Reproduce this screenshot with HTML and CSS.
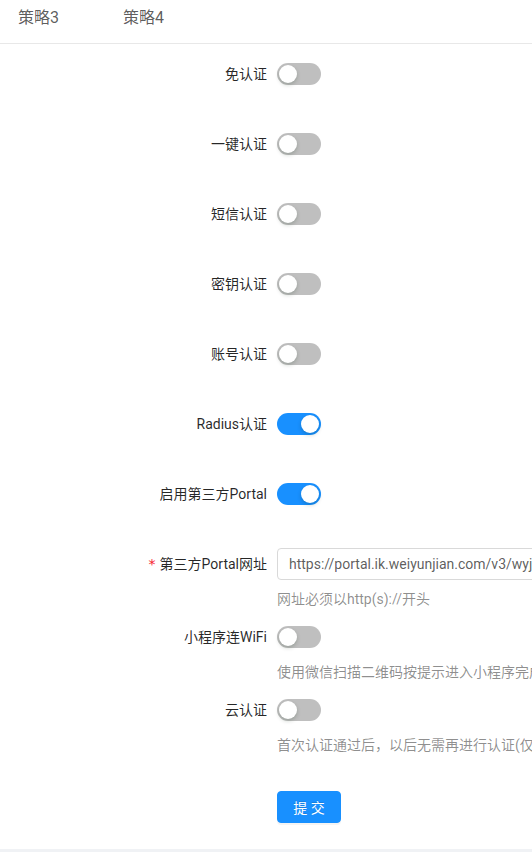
FILE: index.html
```html
<!DOCTYPE html>
<html lang="zh-CN">
<head>
<meta charset="utf-8">
<title>认证策略</title>
<link rel="stylesheet" href="styles.css">
</head>
<body>
<div class="page">
  <div class="tabs">
    <div class="tab">策略3</div>
    <div class="tab">策略4</div>
  </div>
  <form class="form">
    <div class="item">
      <label class="label">免认证</label>
      <div class="control"><span class="switch"></span></div>
    </div>
    <div class="item">
      <label class="label">一键认证</label>
      <div class="control"><span class="switch"></span></div>
    </div>
    <div class="item">
      <label class="label">短信认证</label>
      <div class="control"><span class="switch"></span></div>
    </div>
    <div class="item">
      <label class="label">密钥认证</label>
      <div class="control"><span class="switch"></span></div>
    </div>
    <div class="item">
      <label class="label">账号认证</label>
      <div class="control"><span class="switch"></span></div>
    </div>
    <div class="item">
      <label class="label">Radius认证</label>
      <div class="control"><span class="switch on"></span></div>
    </div>
    <div class="item">
      <label class="label">启用第三方Portal</label>
      <div class="control"><span class="switch on"></span></div>
    </div>
    <div class="item with-help">
      <label class="label"><span class="req">*</span>第三方Portal网址</label>
      <div class="control"><input class="input" type="text" value="https://portal.ik.weiyunjian.com/v3/wyj/portal/index.html"></div>
      <div class="help">网址必须以http(s)://开头</div>
    </div>
    <div class="item with-help">
      <label class="label">小程序连WiFi</label>
      <div class="control"><span class="switch"></span></div>
      <div class="help">使用微信扫描二维码按提示进入小程序完成连网认证</div>
    </div>
    <div class="item with-help last">
      <label class="label">云认证</label>
      <div class="control"><span class="switch"></span></div>
      <div class="help">首次认证通过后，以后无需再进行认证(仅限同一设备)</div>
    </div>
    <div class="item">
      <div></div>
      <div class="control"><button type="button" class="btn">提 交</button></div>
    </div>
  </form>
</div>
</body>
</html>
```

FILE: styles.css
```css
html, body {
  margin: 0;
  padding: 0;
}
body {
  background: #f0f2f5;
  font-family: Roboto, "Noto Sans CJK SC", sans-serif;
  font-size: 14px;
  color: rgba(0, 0, 0, 0.85);
  overflow: hidden;
}
.page {
  background: #fff;
  height: 849px;
  overflow: hidden;
}
.tabs {
  display: flex;
  gap: 32px;
  padding: 0 0 0 2px;
  height: 43px;
  border-bottom: 1px solid #e8e8e8;
}
.tab {
  padding: 6px 16px 13px;
  font-size: 16px;
  line-height: 24px;
  color: rgba(0, 0, 0, 0.65);
}
.form {
  padding-top: 10px;
}
.item {
  display: grid;
  grid-template-columns: 277px 1fr;
  margin-bottom: 30px;
}
.item.with-help {
  margin-bottom: 7px;
}
.item.with-help.last {
  margin-bottom: 31px;
}
.label {
  text-align: right;
  padding-right: 10px;
  line-height: 40px;
  height: 40px;
  white-space: nowrap;
  color: rgba(0, 0, 0, 0.85);
}
.req {
  color: #f5222d;
  font-family: "DejaVu Sans", sans-serif;
  font-size: 14px;
  margin-right: 4px;
}
.control {
  height: 40px;
  display: flex;
  align-items: center;
  min-width: 0;
}
.help {
  grid-column: 2;
  margin-top: 4px;
  line-height: 22px;
  height: 22px;
  color: rgba(0, 0, 0, 0.45);
  white-space: nowrap;
  overflow: hidden;
}
.switch {
  position: relative;
  display: inline-block;
  width: 44px;
  height: 22px;
  border-radius: 100px;
  background: rgba(0, 0, 0, 0.25);
}
.switch::after {
  content: "";
  position: absolute;
  top: 2px;
  left: 2px;
  width: 18px;
  height: 18px;
  border-radius: 50%;
  background: #fff;
  box-shadow: 0 2px 4px 0 rgba(0, 35, 11, 0.2);
}
.switch.on {
  background: #1890ff;
}
.switch.on::after {
  left: 24px;
}
.input {
  box-sizing: border-box;
  width: 420px;
  flex: none;
  height: 32px;
  padding: 4px 11px;
  border: 1px solid #d9d9d9;
  border-radius: 4px;
  font-family: Roboto, "Noto Sans CJK SC", sans-serif;
  font-size: 14px;
  color: rgba(0, 0, 0, 0.65);
  background: #fff;
  outline: none;
}
.btn {
  width: 64px;
  height: 32px;
  padding: 0;
  border: 1px solid #1890ff;
  border-radius: 4px;
  background: #1890ff;
  color: #fff;
  font-family: Roboto, "Noto Sans CJK SC", sans-serif;
  font-size: 14px;
  box-shadow: 0 2px 0 rgba(0, 0, 0, 0.045);
  text-shadow: 0 -1px 0 rgba(0, 0, 0, 0.12);
}
```
